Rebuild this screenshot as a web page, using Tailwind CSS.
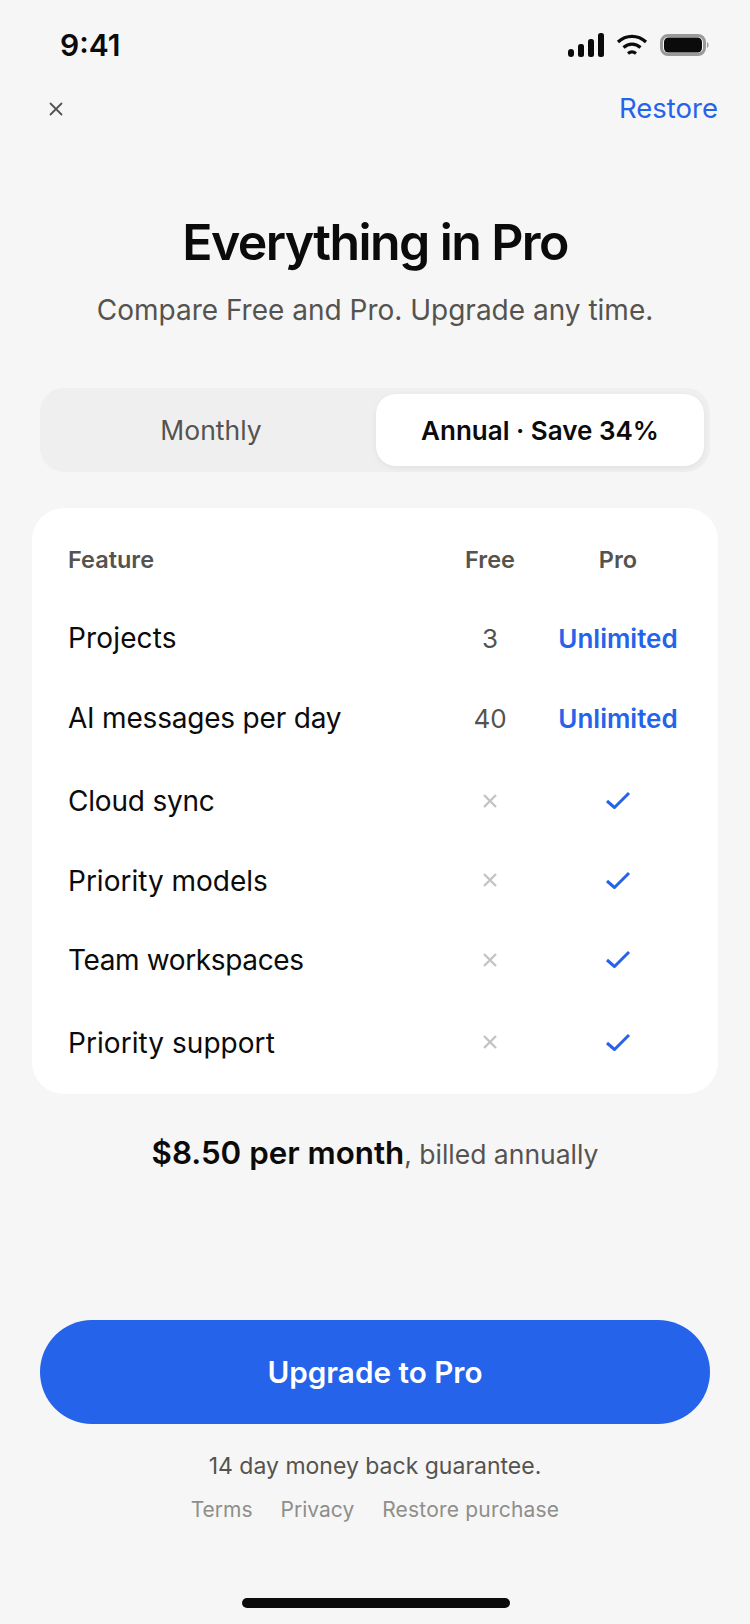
<!DOCTYPE html>
<html lang="en">

<head>
    <meta charset="UTF-8">
    <meta name="viewport" content="width=device-width, initial-scale=1.0">
    <title>Everything in Pro</title>
    <script src="https://cdn.jsdelivr.net/npm/@tailwindcss/browser@4"></script>
</head>

<body class="w-[750px] h-[1624px] overflow-hidden bg-[#f6f6f6] text-[#0b0b0b] font-['Inter',sans-serif] flex flex-col">
    <!-- status bar -->
    <div class="h-[90px] shrink-0 flex items-center justify-between pl-[60px] pr-[41px]">
        <span class="text-[30px] font-semibold leading-none">9:41</span>
        <div class="flex items-center gap-[12px]">
            <svg width="36" height="24" viewBox="0 0 36 24" fill="#0b0b0b">
                <rect x="0" y="16" width="6" height="8" rx="3" />
                <rect x="10" y="11" width="6" height="13" rx="2.5" />
                <rect x="20" y="6" width="6" height="18" rx="2.5" />
                <rect x="30" y="0" width="6" height="24" rx="2.5" />
            </svg>
            <svg width="32" height="22" viewBox="0 0 32 22" fill="none" stroke="#0b0b0b" stroke-width="3.2">
                <path d="M2 8 C10 0.5 22 0.5 30 8" />
                <path d="M7.5 13.5 C12.5 9 19.5 9 24.5 13.5" />
                <path d="M12 19.5 C14.5 17.5 17.5 17.5 20 19.5" />
            </svg>
            <svg width="49" height="22" viewBox="0 0 49 22" fill="none">
                <rect x="1.5" y="1.5" width="43" height="19" rx="6.5" stroke="#9a9a9a" stroke-width="3" />
                <rect x="4" y="3.5" width="38" height="15" rx="4.5" fill="#0b0b0b" />
                <path d="M47 8 C49 9 49 13 47 14 Z" fill="#9a9a9a" />
            </svg>
        </div>
    </div>

    <!-- nav -->
    <div class="h-[38px] shrink-0 flex items-center justify-between pl-[49px] pr-[32px]">
        <svg width="14" height="14" viewBox="0 0 14 14" stroke="#55534f" stroke-width="1.8" stroke-linecap="round">
            <path d="M1.5 1.5 L12.5 12.5 M12.5 1.5 L1.5 12.5" />
        </svg>
        <span class="text-[27.5px] leading-none text-[#2563eb]">Restore</span>
    </div>

    <!-- heading -->
    <div class="mt-[85px] flex flex-col items-center">
        <h1 class="text-[50px] leading-[58px] font-semibold tracking-[-1.6px]">Everything in Pro</h1>
        <p class="mt-[21px] text-[28px] leading-[36px] text-[#55534f]">Compare Free and Pro. Upgrade any time.</p>
    </div>

    <!-- billing toggle -->
    <div class="mt-[60px] mx-[40px] h-[84px] shrink-0 rounded-[24px] bg-[#efefef] p-[6px] flex">
        <div class="w-[330px] pt-[2px] flex items-center justify-center text-[26.5px] text-[#55534f]">Monthly</div>
        <div class="w-[328px] rounded-[20px] bg-white shadow-[0_2px_6px_rgba(0,0,0,0.06)] flex items-center justify-center text-[26px] font-semibold">Annual · Save 34%</div>
    </div>

    <!-- comparison table -->
    <div class="mt-[36px] mx-[32px] h-[586px] shrink-0 rounded-[32px] bg-white px-[36px] pt-[13px]">
        <div class="h-[77px] grid grid-cols-[1fr_128px_128px] items-center text-[23.5px] font-semibold text-[#55534f] text-center">
            <span class="text-left">Feature</span>
            <span>Free</span>
            <span>Pro</span>
        </div>
        <div class="h-[80px] grid grid-cols-[1fr_128px_128px] items-center text-center">
            <span class="text-left text-[28px] tracking-[0.15px]">Projects</span>
            <span class="text-[26px] text-[#55534f]">3</span>
            <span class="text-[26px] font-semibold text-[#2563eb]">Unlimited</span>
        </div>
        <div class="h-[80px] grid grid-cols-[1fr_128px_128px] items-center text-center">
            <span class="text-left text-[28px] tracking-[-0.2px]">AI messages per day</span>
            <span class="text-[26px] text-[#55534f]">40</span>
            <span class="text-[26px] font-semibold text-[#2563eb]">Unlimited</span>
        </div>
        <div class="mt-[2px] h-[81px] grid grid-cols-[1fr_128px_128px] items-center text-center">
            <span class="text-left text-[28px] tracking-[-0.2px]">Cloud sync</span>
            <svg class="mx-auto" width="16" height="16" viewBox="0 0 16 16" stroke="#c4c4c2" stroke-width="2.4"><path d="M2 2 L14 14 M14 2 L2 14" /></svg>
            <svg class="mx-auto" width="26" height="20" viewBox="0 0 26 20" fill="none" stroke="#2563eb" stroke-width="3" stroke-linejoin="round"><path d="M2 10 L9.5 16.5 L24 2" /></svg>
        </div>
        <div class="h-[79px] grid grid-cols-[1fr_128px_128px] items-center text-center">
            <span class="text-left text-[28px]">Priority models</span>
            <svg class="mx-auto -mt-[2px]" width="16" height="16" viewBox="0 0 16 16" stroke="#c4c4c2" stroke-width="2.4"><path d="M2 2 L14 14 M14 2 L2 14" /></svg>
            <svg class="mx-auto" width="26" height="20" viewBox="0 0 26 20" fill="none" stroke="#2563eb" stroke-width="3" stroke-linejoin="round"><path d="M2 10 L9.5 16.5 L24 2" /></svg>
        </div>
        <div class="h-[80px] grid grid-cols-[1fr_128px_128px] items-center text-center">
            <span class="text-left text-[28px] tracking-[-0.37px]">Team workspaces</span>
            <svg class="mx-auto" width="16" height="16" viewBox="0 0 16 16" stroke="#c4c4c2" stroke-width="2.4"><path d="M2 2 L14 14 M14 2 L2 14" /></svg>
            <svg class="mx-auto" width="26" height="20" viewBox="0 0 26 20" fill="none" stroke="#2563eb" stroke-width="3" stroke-linejoin="round"><path d="M2 10 L9.5 16.5 L24 2" /></svg>
        </div>
        <div class="h-[85px] grid grid-cols-[1fr_128px_128px] items-center text-center">
            <span class="text-left text-[28px] tracking-[0.05px]">Priority support</span>
            <svg class="mx-auto -mt-[2px]" width="16" height="16" viewBox="0 0 16 16" stroke="#c4c4c2" stroke-width="2.4"><path d="M2 2 L14 14 M14 2 L2 14" /></svg>
            <svg class="mx-auto" width="26" height="20" viewBox="0 0 26 20" fill="none" stroke="#2563eb" stroke-width="3" stroke-linejoin="round"><path d="M2 10 L9.5 16.5 L24 2" /></svg>
        </div>
    </div>

    <!-- price -->
    <p class="mt-[38px] text-center leading-[42px] text-[#55534f] text-[26.5px]"><span class="text-[31.3px] font-semibold text-[#0b0b0b]">$8.50 per month</span>, billed annually</p>

    <!-- cta -->
    <button class="mt-[145px] mx-[40px] h-[104px] shrink-0 rounded-full bg-[#2563eb] text-white text-[29.7px] font-semibold">Upgrade to Pro</button>
    <p class="mt-[28px] text-center text-[23px] leading-[28px] text-[#55534f]">14 day money back guarantee.</p>
    <div class="mt-[17px] flex justify-center gap-[28px] text-[21px] leading-[26px] text-[#8f8e89]">
        <span>Terms</span>
        <span>Privacy</span>
        <span class="tracking-[0.2px]">Restore purchase</span>
    </div>

    <!-- home indicator -->
    <div class="mt-auto mb-[16px] ml-[242px] w-[268px] h-[10px] shrink-0 rounded-full bg-[#0b0b0b]"></div>
</body>

</html>
